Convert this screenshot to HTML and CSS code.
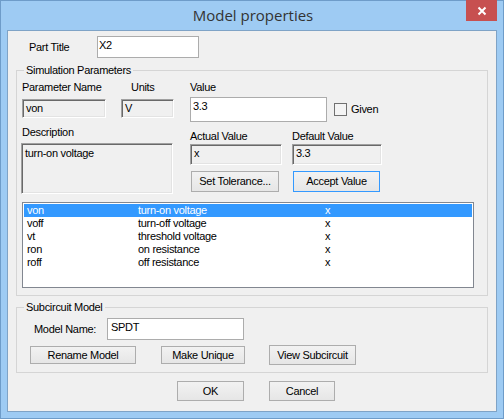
FILE: index.html
```html
<!DOCTYPE html>
<html lang="en">

<head>
    <meta charset="UTF-8">
    <title>Model properties</title>
    <link rel="stylesheet" href="styles.css">
</head>

<body>
    <div class="window">
        <div class="titlebar">
            <span class="title">Model properties</span>
            <div class="close-btn">
                <svg width="10" height="10" viewBox="0 0 10 10">
                    <path d="M1.5 1.5 L8.5 8.5 M8.5 1.5 L1.5 8.5" stroke="#fff" stroke-width="2" />
                </svg>
            </div>
        </div>

        <div class="client">
            <div class="part-row">
                <span class="part-label">Part Title</span>
                <div class="edit part-edit">X2</div>
            </div>

            <div class="group sim-group">
                <span class="group-title">Simulation Parameters</span>

                <div class="params">
                    <div class="col-left">
                        <div class="label-row">
                            <span class="lbl-name">Parameter Name</span>
                            <span>Units</span>
                        </div>
                        <div class="field-row">
                            <div class="sunken name-field">von</div>
                            <div class="sunken units-field">V</div>
                        </div>
                        <div class="desc-label">Description</div>
                        <div class="sunken desc-box">turn-on voltage</div>
                    </div>

                    <div class="col-right">
                        <div class="value-label">Value</div>
                        <div class="value-row">
                            <div class="edit value-edit">3.3</div>
                            <span class="checkbox"></span>
                            <span class="check-label">Given</span>
                        </div>
                        <div class="label-row">
                            <span class="lbl-actual">Actual Value</span>
                            <span>Default Value</span>
                        </div>
                        <div class="field-row tight">
                            <div class="sunken actual-field">x</div>
                            <div class="sunken default-field">3.3</div>
                        </div>
                        <div class="btn-row">
                            <div class="btn tol-btn">Set Tolerance...</div>
                            <div class="btn btn-default accept-btn">Accept Value</div>
                        </div>
                    </div>
                </div>

                <div class="listbox">
                    <div class="list-row selected"><span>von</span><span>turn-on voltage</span><span>x</span></div>
                    <div class="list-row"><span>voff</span><span>turn-off voltage</span><span>x</span></div>
                    <div class="list-row"><span>vt</span><span>threshold voltage</span><span>x</span></div>
                    <div class="list-row"><span>ron</span><span>on resistance</span><span>x</span></div>
                    <div class="list-row"><span>roff</span><span>off resistance</span><span>x</span></div>
                </div>
            </div>

            <div class="group sub-group">
                <span class="group-title">Subcircuit Model</span>
                <div class="model-row">
                    <span class="model-label">Model Name:</span>
                    <div class="edit model-edit">SPDT</div>
                </div>
                <div class="sub-buttons">
                    <div class="btn rename-btn">Rename Model</div>
                    <div class="btn unique-btn">Make Unique</div>
                    <div class="btn view-btn">View Subcircuit</div>
                </div>
            </div>

            <div class="dialog-buttons">
                <div class="btn ok-btn">OK</div>
                <div class="btn cancel-btn">Cancel</div>
            </div>
        </div>
    </div>
</body>

</html>
```

FILE: styles.css
```css
* {
    box-sizing: border-box;
    margin: 0;
    padding: 0;
}

body {
    font-family: "Liberation Sans", Arial, sans-serif;
    font-size: 11px;
    line-height: 13px;
    letter-spacing: -0.3px;
    color: #000;
    background: #fff;
}

.window {
    width: 504px;
    height: 419px;
    border: 1px solid #6e9cc9;
    background-color: #9ecbf3;
}

/* title bar */
.titlebar {
    position: relative;
    height: 29px;
    display: flex;
    align-items: center;
    justify-content: center;
}

.title {
    font-family: "Open Sans", "Noto Sans", sans-serif;
    font-size: 15px;
    letter-spacing: 0;
    color: #333;
    margin-left: 2px;
}

.close-btn {
    position: absolute;
    top: -1px;
    right: 6px;
    width: 31px;
    height: 21px;
    background-color: #c75050;
    display: flex;
    align-items: center;
    justify-content: center;
}

/* client area */
.client {
    margin: 0 6px 0 6px;
    height: 382px;
    border: 1px solid #7fa3c6;
    background-color: #f0f0f0;
}

.part-row {
    display: flex;
    align-items: center;
    margin-top: 5px;
    padding-left: 21px;
}

.part-label {
    width: 68px;
}

.edit {
    background-color: #fff;
    border: 1px solid #acacac;
    padding: 2px 2px;
}

.part-edit {
    width: 102px;
    height: 22px;
    padding-left: 1px;
}

/* group boxes */
.group {
    margin: 12px 8px 0 8px;
    border: 1px solid #d5d5d5;
}

.group-title {
    display: block;
    width: fit-content;
    margin: -7px 0 0 7px;
    padding: 0 2px;
    background-color: #f0f0f0;
}

.sim-group {
    padding-bottom: 7px;
}

.params {
    display: flex;
    gap: 16px;
    margin-top: 4px;
    padding-left: 4px;
}

.col-left {
    width: 153px;
}

.label-row {
    display: flex;
}

.lbl-name {
    width: 110px;
    padding-left: 1px;
}

.lbl-actual {
    width: 102px;
}

.field-row {
    display: flex;
    margin-top: 5px;
}

.field-row.tight {
    margin-top: 1px;
}

.sunken {
    background-color: #f0f0f0;
    border: 1px solid;
    border-color: #a0a0a0 #fff #fff #a0a0a0;
    box-shadow: inset 1px 1px 0 #696969, inset -1px -1px 0 #e3e3e3;
    padding: 2px 3px;
}

.name-field {
    width: 84px;
    height: 19px;
    margin-left: 1px;
}

.units-field {
    width: 53px;
    height: 19px;
    margin-left: 15px;
}

.desc-label {
    margin-top: 8px;
    padding-left: 1px;
}

.desc-box {
    width: 152px;
    height: 51px;
    margin-top: 4px;
    padding-top: 3px;
}

.value-row {
    display: flex;
    align-items: center;
    margin-top: 3px;
}

.value-edit {
    width: 137px;
    height: 25px;
    padding-left: 2px;
}

.checkbox {
    width: 13px;
    height: 13px;
    margin-left: 7px;
    border: 1px solid #707070;
    background-color: #f4f4f4;
}

.check-label {
    margin-left: 4px;
}

.col-right .label-row {
    margin-top: 8px;
}

.actual-field {
    width: 92px;
    height: 21px;
}

.default-field {
    width: 90px;
    height: 21px;
    margin-left: 10px;
}

.btn-row {
    display: flex;
    margin-top: 6px;
}

.btn {
    display: flex;
    align-items: center;
    justify-content: center;
    border: 1px solid #adadad;
    background: linear-gradient(#f2f2f2, #e6e6e6);
}

.btn-default {
    border-color: #3399ff;
}

.tol-btn {
    width: 88px;
    height: 21px;
    margin-left: 1px;
}

.accept-btn {
    width: 87px;
    height: 21px;
    margin-left: 14px;
}

/* parameter list */
.listbox {
    width: 452px;
    height: 86px;
    margin: 8px 0 0 5px;
    border: 1px solid #828790;
    background-color: #fff;
    padding: 1px;
}

.list-row {
    display: flex;
    height: 13px;
    padding-left: 3px;
}

.list-row span:nth-child(1) {
    width: 111px;
}

.list-row span:nth-child(2) {
    width: 187px;
}

.list-row.selected {
    background-color: #3399ff;
    color: #fff;
}

/* subcircuit group */
.sub-group {
    margin-top: 11px;
    padding-bottom: 7px;
}

.model-row {
    display: flex;
    align-items: center;
    margin-top: 4px;
    padding-left: 17px;
}

.model-label {
    width: 73px;
}

.model-edit {
    width: 137px;
    height: 22px;
    padding-left: 3px;
}

.sub-buttons {
    display: flex;
    align-items: center;
    margin-top: 5px;
    padding-left: 13px;
}

.rename-btn {
    width: 106px;
    height: 18px;
}

.unique-btn {
    width: 84px;
    height: 18px;
    margin-left: 25px;
}

.view-btn {
    width: 87px;
    height: 20px;
    margin-left: 24px;
}

.dialog-buttons {
    display: flex;
    margin-top: 8px;
    padding-left: 169px;
}

.ok-btn {
    width: 67px;
    height: 20px;
}

.cancel-btn {
    width: 66px;
    height: 20px;
    margin-left: 25px;
}
```
